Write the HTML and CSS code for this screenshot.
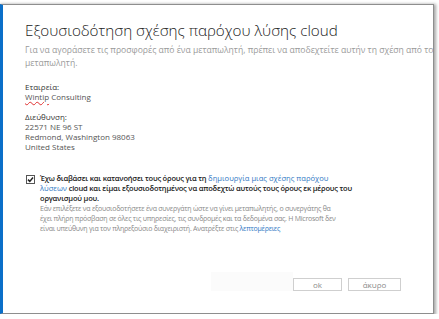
FILE: index.html
```html
<!DOCTYPE html>
<html lang="el">
<head>
<meta charset="utf-8">
<link rel="stylesheet" href="styles.css">
</head>
<body>
<div class="dialog">
  <h1 class="title">Εξουσιοδότηση σχέσης παρόχου λύσης cloud</h1>
  <p class="subtitle">Για να αγοράσετε τις προσφορές από ένα μεταπωλητή, πρέπει να αποδεχτείτε αυτήν τη σχέση από το<br>μεταπωλητή.</p>

  <div class="field">
    <div class="label">Εταιρεία:</div>
    <div class="value"><span class="spell">Wintip</span> Consulting</div>
  </div>

  <div class="field">
    <div class="label">Διεύθυνση:</div>
    <div class="value">22571 NE 96 ST</div>
    <div class="value">Redmond, Washington 98063</div>
    <div class="value">United States</div>
  </div>

  <div class="agree">
    <span class="check">
      <svg width="9" height="9" viewBox="0 0 9 9"><rect x="0.5" y="0.5" width="8" height="8" fill="#fff" stroke="#555"/><path d="M2 4.6 L3.8 6.4 L7 2.6" fill="none" stroke="#222" stroke-width="1.5"/></svg>
    </span>
    <div class="agree-text">
      <p class="terms">Έχω διαβάσει και κατανοήσει τους όρους για τη <a class="link">δημιουργία μιας σχέσης παρόχου<br>λύσεων</a> cloud και είμαι εξουσιοδοτημένος να αποδεχτώ αυτούς τους όρους εκ μέρους του<br>οργανισμού μου.</p>
      <p class="note">Εάν επιλέξετε να εξουσιοδοτήσετε ένα συνεργάτη ώστε να γίνει μεταπωλητής, ο συνεργάτης θα<br>έχει πλήρη πρόσβαση σε όλες τις υπηρεσίες, τις συνδρομές και τα δεδομένα σας. Η Microsoft δεν<br>είναι υπεύθυνη για τον πληρεξούσιο διαχειριστή. Ανατρέξτε στις <a class="link">λεπτομέρειες</a></p>
    </div>
  </div>

  <div class="actions">
    <span class="ghost"></span>
    <button class="btn ok">ok</button>
    <button class="btn">άκυρο</button>
  </div>
</div>
</body>
</html>
```

FILE: styles.css
```css
html, body {
  margin: 0;
  padding: 0;
  background: #ffffff;
}
body {
  padding-top: 4px;
  font-family: "Open Sans", "Noto Sans", sans-serif;
}
.dialog {
  box-sizing: border-box;
  width: 434px;
  height: 310px;
  background: #fff;
  border: 1px solid #8e8e8e;
  border-left: 3px solid #0a6fc9;
  box-shadow: 1px 1px 3px 1px rgba(0,0,0,0.35);
  padding: 14px 0 0 22px;
  display: flex;
  flex-direction: column;
}
.title {
  margin: 0;
  font-size: 15.2px;
  font-weight: 300;
  line-height: 22px;
  color: #222;
  white-space: nowrap;
}
.subtitle {
  margin: 3px 0 0 0;
  font-size: 8.6px;
  line-height: 13px;
  color: #9a9a9a;
  white-space: nowrap;
}
.field {
  margin-top: 12px;
  font-size: 8px;
  line-height: 10px;
  color: #333;
}
.field + .field { margin-top: 10px; }
.label { color: #333; }
.value { color: #555; }
.spell {
  text-decoration: underline wavy #e03030;
  text-decoration-thickness: 1px;
  text-underline-offset: 1px;
}
.agree {
  margin-top: 21px;
  display: flex;
  gap: 5px;
}
.check {
  margin-top: 2px;
  line-height: 0;
  margin-left: 1px;
}
.agree-text p { margin: 0; white-space: nowrap; }
.terms {
  font-size: 7.5px;
  line-height: 10px;
  font-weight: 600;
  letter-spacing: -0.2px;
  color: #222;
}
.terms .link {
  font-size: 7.6px;
}
.note {
  margin-top: 1px !important;
  font-size: 7px;
  line-height: 10px;
  letter-spacing: -0.25px;
  color: #8a8a8a;
}
.note .link { letter-spacing: -0.25px; }
.link {
  color: #2f78c4;
  font-weight: 400;
  letter-spacing: 0;
}
.actions {
  margin-top: auto;
  margin-bottom: 22px;
  margin-right: 32px;
  display: flex;
  justify-content: flex-end;
  align-items: flex-end;
  gap: 6px;
}
.ghost {
  width: 82px;
  height: 19px;
  background: #fbfbfb;
  margin-right: -6px;
}
.btn {
  font-family: inherit;
  font-size: 8px;
  color: #8a8a8a;
  background: #fff;
  border: 1px solid #cfcfcf;
  height: 13px;
  width: 53px;
  padding: 0;
  line-height: 11px;
}
.btn.ok { width: 49px; }
```
